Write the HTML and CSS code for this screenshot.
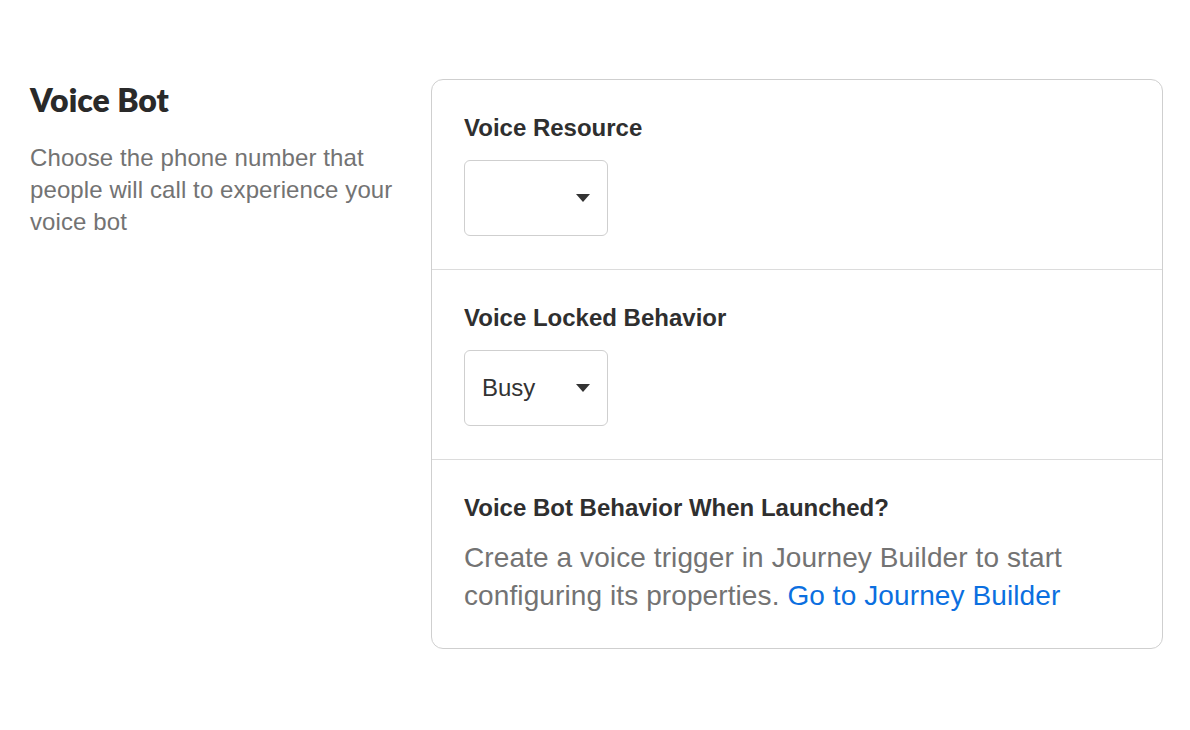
FILE: index.html
```html
<!DOCTYPE html>
<html>
<head>
<meta charset="utf-8">
<link rel="stylesheet" href="styles.css">
</head>
<body>
<div class="page">
  <div class="intro">
    <h1 class="intro-title">Voice Bot</h1>
    <p class="intro-text">Choose the phone number that people will call to experience your voice bot</p>
  </div>
  <div class="card">
    <div class="section">
      <div class="label">Voice Resource</div>
      <div class="select">
        <span class="select-value"></span>
        <svg class="caret" width="14" height="8" viewBox="0 0 14 8"><path d="M0 0 H14 L7 8 Z" fill="#333"/></svg>
      </div>
    </div>
    <div class="section">
      <div class="label">Voice Locked Behavior</div>
      <div class="select">
        <span class="select-value">Busy</span>
        <svg class="caret" width="14" height="8" viewBox="0 0 14 8"><path d="M0 0 H14 L7 8 Z" fill="#333"/></svg>
      </div>
    </div>
    <div class="section section-last">
      <div class="label">Voice Bot Behavior When Launched?</div>
      <p class="body-text">Create a voice trigger in Journey Builder to start configuring its properties. <a class="link" href="#">Go to Journey Builder</a></p>
    </div>
  </div>
</div>
</body>
</html>
```
FILE: styles.css
```css
* { box-sizing: border-box; }
html, body { margin: 0; padding: 0; background: #fff; }
body { font-family: "Liberation Sans", Arial, sans-serif; color: #333; }
.page {
  display: flex;
  padding: 79px 27px 0 30px;
  gap: 31px;
}
.intro { width: 370px; flex: none; padding-top: 1px; }
.intro-title {
  margin: 0;
  font-family: Lato, "Liberation Sans", sans-serif;
  font-weight: 800;
  font-size: 32px;
  line-height: 40px;
  color: #2a2a2a;
}
.intro-text {
  margin: 22px 0 0;
  font-size: 24px;
  line-height: 32px;
  color: #737373;
  letter-spacing: 0.1px;
}
.card {
  flex: 1;
  border: 1px solid #cfcfcf;
  border-radius: 12px;
}
.section {
  padding: 34px 32px 0;
  border-top: 1px solid #dcdcdc;
  height: 190px;
}
.section:first-child { border-top: none; height: 189px; }
.section-last { height: 189px; }
.label {
  font-weight: 700;
  font-size: 24px;
  line-height: 28px;
  color: #2f2f2f;
}
.select {
  margin-top: 18px;
  width: 144px;
  height: 76px;
  border: 1px solid #cfcfcf;
  border-radius: 6px;
  display: flex;
  align-items: center;
  justify-content: space-between;
  padding: 0 17px 0 17px;
}
.select-value { font-size: 24px; color: #333; }
.caret { flex: none; }
.body-text {
  margin: 17px 0 0;
  font-size: 28px;
  line-height: 38px;
  color: #737373;
  letter-spacing: 0.1px;
}
.link { color: #0b6fe0; text-decoration: none; }
```
